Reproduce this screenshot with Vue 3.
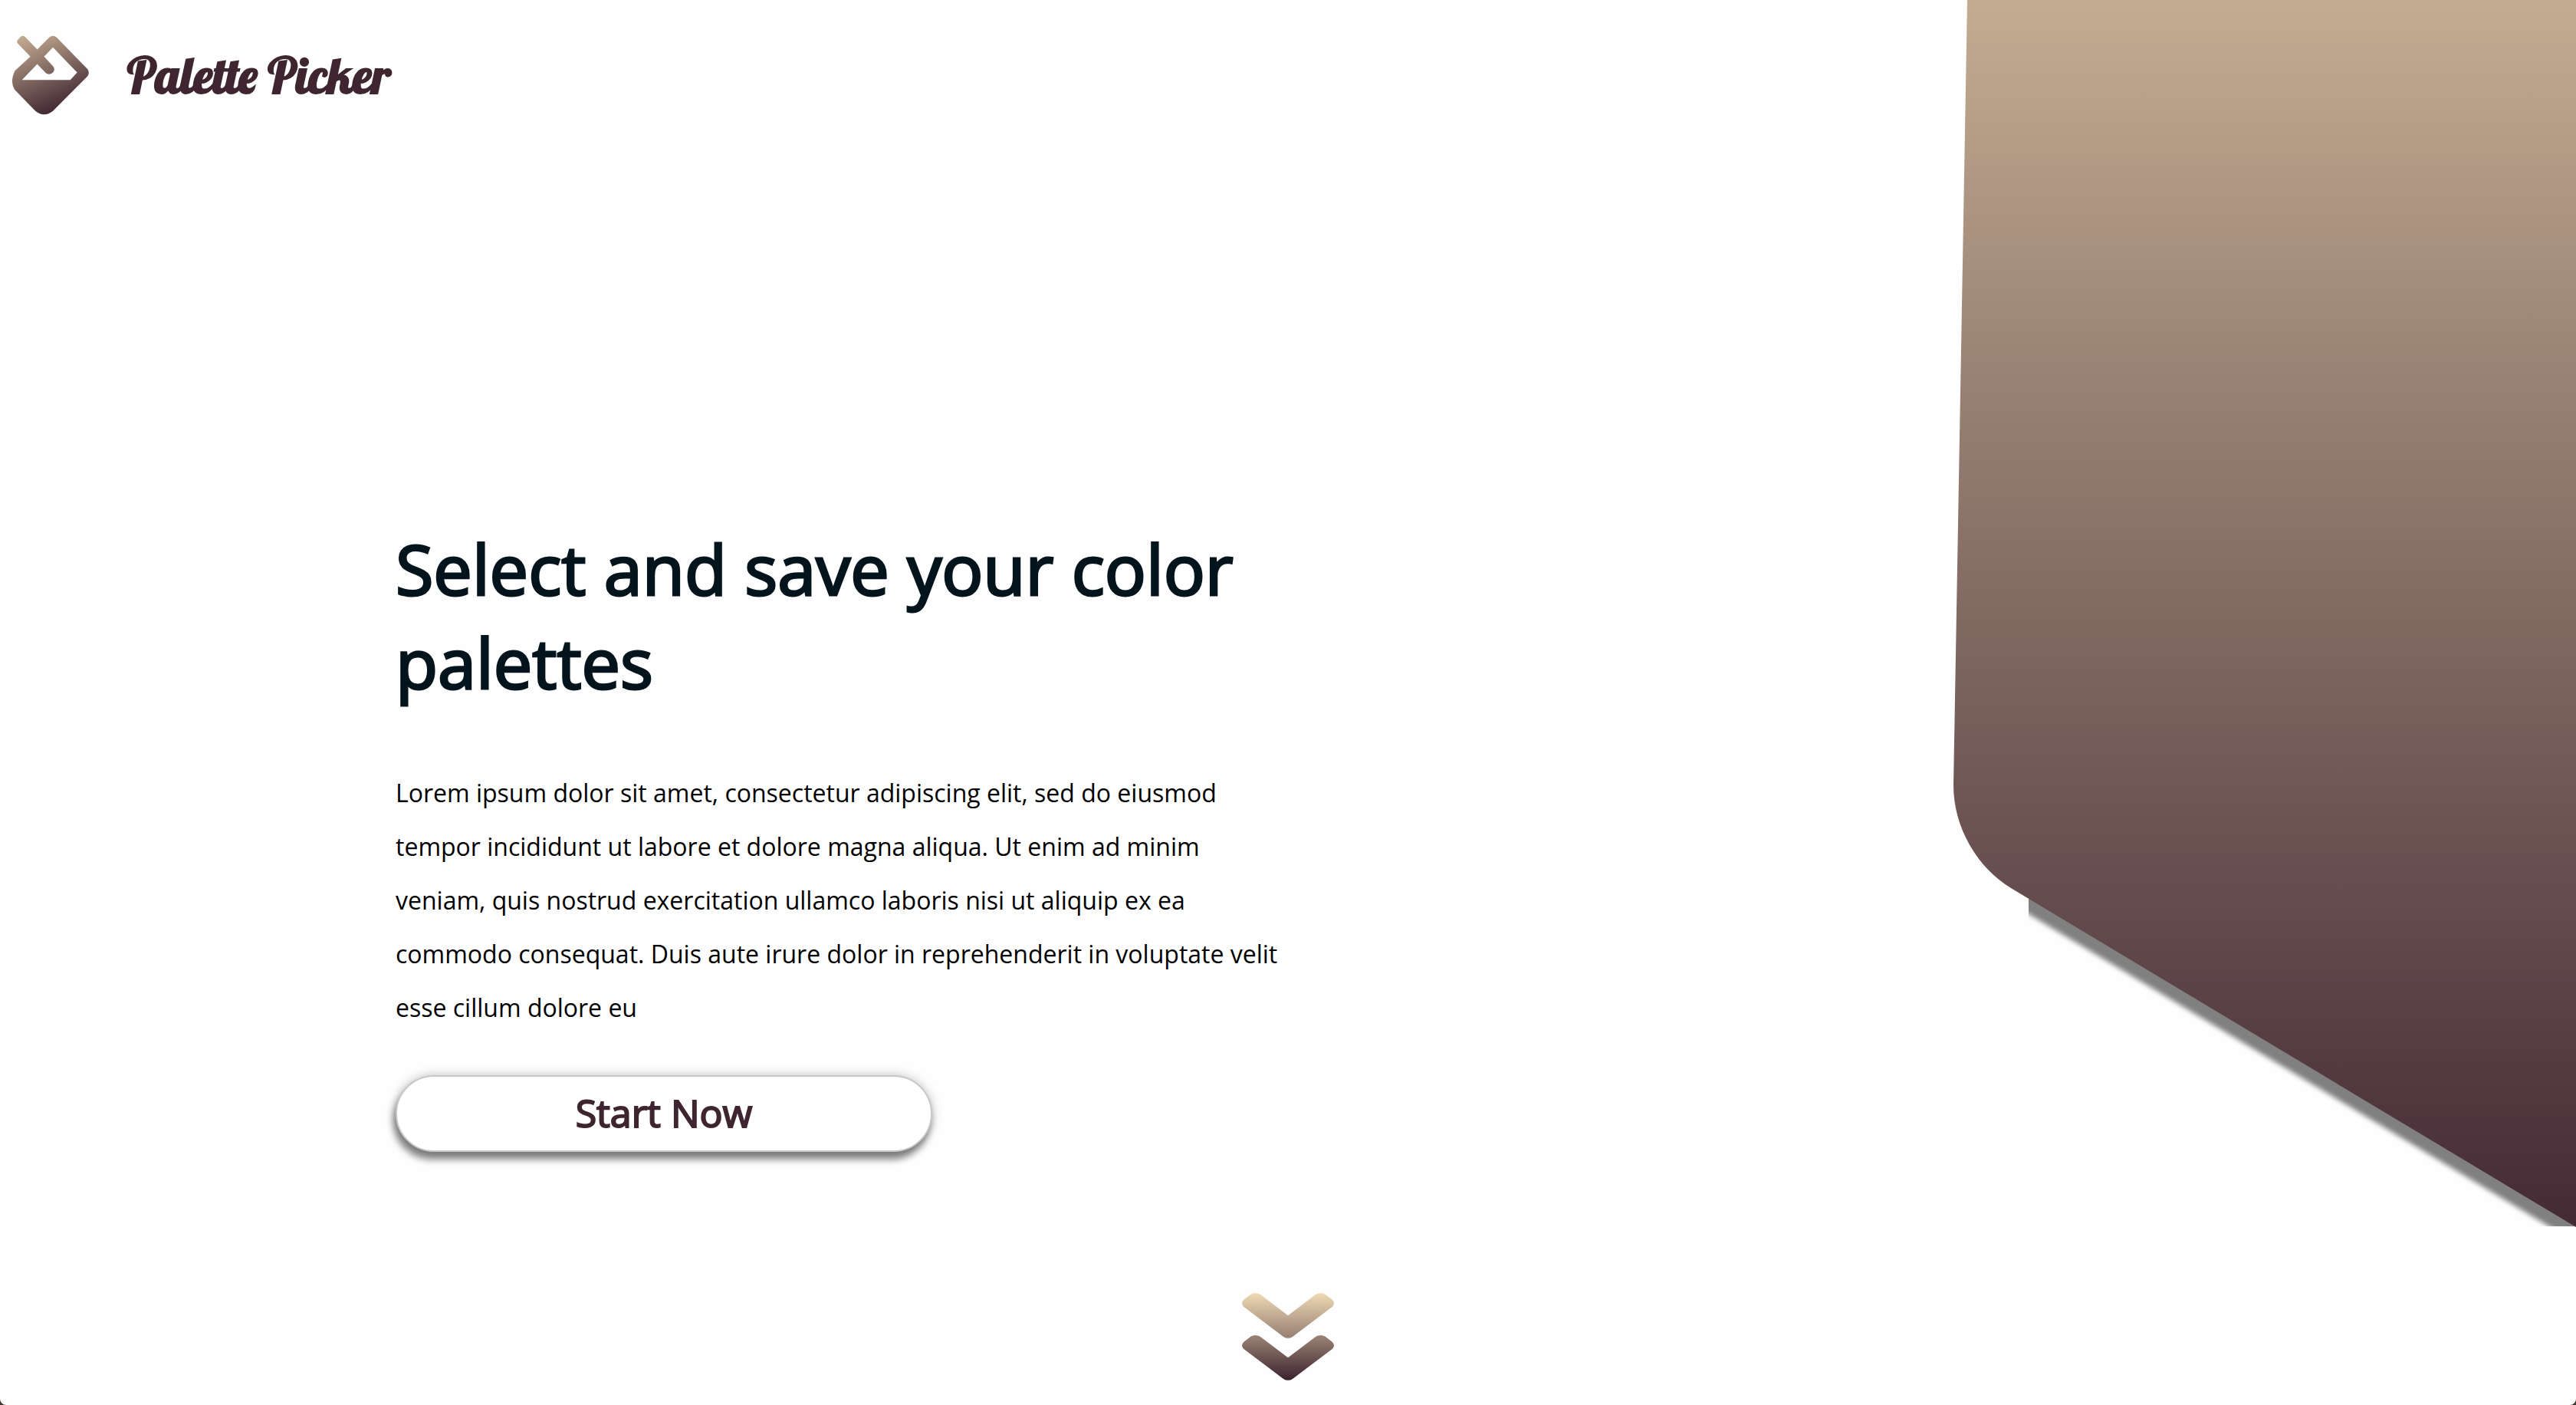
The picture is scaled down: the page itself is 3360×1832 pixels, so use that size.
<script setup>
const title = 'Select and save your color palettes'
const description =
  'Lorem ipsum dolor sit amet, consectetur adipiscing elit, sed do eiusmod tempor incididunt ut labore et dolore magna aliqua. Ut enim ad minim veniam, quis nostrud exercitation ullamco laboris nisi ut aliquip ex ea commodo consequat. Duis aute irure dolor in reprehenderit in voluptate velit esse cillum dolore eu'
</script>

<template>
  <div class="page">
    <div class="hero">
      <div class="main-column">
        <header class="brand">
          <svg class="logo" viewBox="46 53 292 301" aria-hidden="true">
            <defs>
              <linearGradient id="logo-fill" gradientUnits="userSpaceOnUse" x1="80" y1="55" x2="205" y2="350">
                <stop offset="0" stop-color="#c4ac92" />
                <stop offset="1" stop-color="#3f2530" />
              </linearGradient>
            </defs>
            <path
              fill="url(#logo-fill)"
              fill-rule="evenodd"
              d="M78 57Q86 50 94 57L141 106L187 60Q201 47 215 60L333 181Q342 194 333 207L200 341Q167 366 135 341L56 260Q36 229 56 187L115 133L67 83Q61 76 67 69ZM201 98L167 133L201 169Q210 181 203 191Q190 206 175 196L141 161L83 222L267 222L293 193Z"
            />
          </svg>
          <span class="brand-name">Palette Picker</span>
        </header>
        <main class="intro">
          <h1>{{ title }}</h1>
          <p>{{ description }}</p>
          <button type="button" class="start">Start Now</button>
        </main>
      </div>
      <svg class="ribbon" viewBox="0 0 812 1600" aria-hidden="true">
        <defs>
          <linearGradient id="ribbon-fill" x1="0" y1="0" x2="0" y2="1">
            <stop offset="0" stop-color="#c4ac92" />
            <stop offset="0.3" stop-color="#9a8374" />
            <stop offset="1" stop-color="#452a35" />
          </linearGradient>
          <filter id="soft" x="-5%" y="-5%" width="110%" height="110%">
            <feGaussianBlur stdDeviation="3" />
          </filter>
          <clipPath id="shadow-area">
            <rect x="98" y="1100" width="714" height="499" />
          </clipPath>
        </defs>
        <g clip-path="url(#shadow-area)">
          <path d="M60 1100V1169L850 1643V1100Z" fill="#808080" filter="url(#soft)" />
        </g>
        <path d="M18 0L0 1024C0 1080 32 1132 75 1158L812 1600V0Z" fill="url(#ribbon-fill)" />
      </svg>
    </div>
    <footer class="more">
      <a href="#more" aria-label="Scroll down">
        <svg class="chevrons" viewBox="90 78 360 342" aria-hidden="true">
          <defs>
            <linearGradient id="chevron-fill" gradientUnits="userSpaceOnUse" x1="0" y1="78" x2="0" y2="420">
              <stop offset="0" stop-color="#efdab3" />
              <stop offset="0.5" stop-color="#988073" />
              <stop offset="1" stop-color="#3c222e" />
            </linearGradient>
          </defs>
          <path
            fill="url(#chevron-fill)"
            d="M124 83Q142 73 161 83L270 166L379 83Q397 73 416 83L443 104Q457 118 443 132L289 248Q270 261 251 248L97 132Q83 118 97 104ZM124 248Q142 238 161 248L270 331L379 248Q397 238 416 248L443 269Q457 283 443 297L289 413Q270 426 251 413L97 297Q83 283 97 269Z"
          />
        </svg>
      </a>
    </footer>
  </div>
</template>

<style>
html {
  background: #40352c;
}
</style>

<style scoped>
.page {
  min-height: 100vh;
  background: #fefefe;
  border-radius: 0 0 8px 8px;
  font-family: "Open Sans", "Noto Sans", sans-serif;
  overflow: hidden;
}

.hero {
  display: flex;
  align-items: flex-start;
}

.main-column {
  flex: 1;
  min-width: 0;
}

.brand {
  display: flex;
  align-items: center;
  gap: 50px;
  padding: 46px 16px 0;
}

.logo {
  width: 100px;
  height: 104px;
}

.brand-name {
  color: #3f2530;
  font-family: Lobster, "Liberation Serif", serif;
  font-size: 64px;
  font-weight: 700;
  line-height: 80px;
}

.intro {
  width: 1160px;
  max-width: 80%;
  margin: 530px 0 0 516px;
}

h1 {
  margin: 0;
  color: #04141c;
  font-size: 90px;
  font-weight: 400;
  line-height: 122px;
  -webkit-text-stroke: 3px #04141c;
}

p {
  margin: 75px 0 0;
  color: #000;
  font-size: 32px;
  line-height: 70px;
}

.start {
  display: block;
  width: 700px;
  height: 100px;
  margin: 53px 0 0;
  padding: 0 0 2px;
  border: 2px solid #c8c8c8;
  border-radius: 50px;
  background: #fff;
  box-shadow: -3px 10px 10px rgba(0, 0, 0, 0.45), 0 0 14px rgba(0, 0, 0, 0.25);
  color: #3f2530;
  font-family: inherit;
  font-size: 50px;
  line-height: 68px;
  -webkit-text-stroke: 2px #3f2530;
}

.ribbon {
  display: block;
  flex: none;
  width: 812px;
  height: 1600px;
}

.more {
  display: flex;
  justify-content: center;
  padding: 86px 0 32px;
}

.more a {
  display: block;
}

.chevrons {
  display: block;
  width: 120px;
  height: 114px;
}
</style>
